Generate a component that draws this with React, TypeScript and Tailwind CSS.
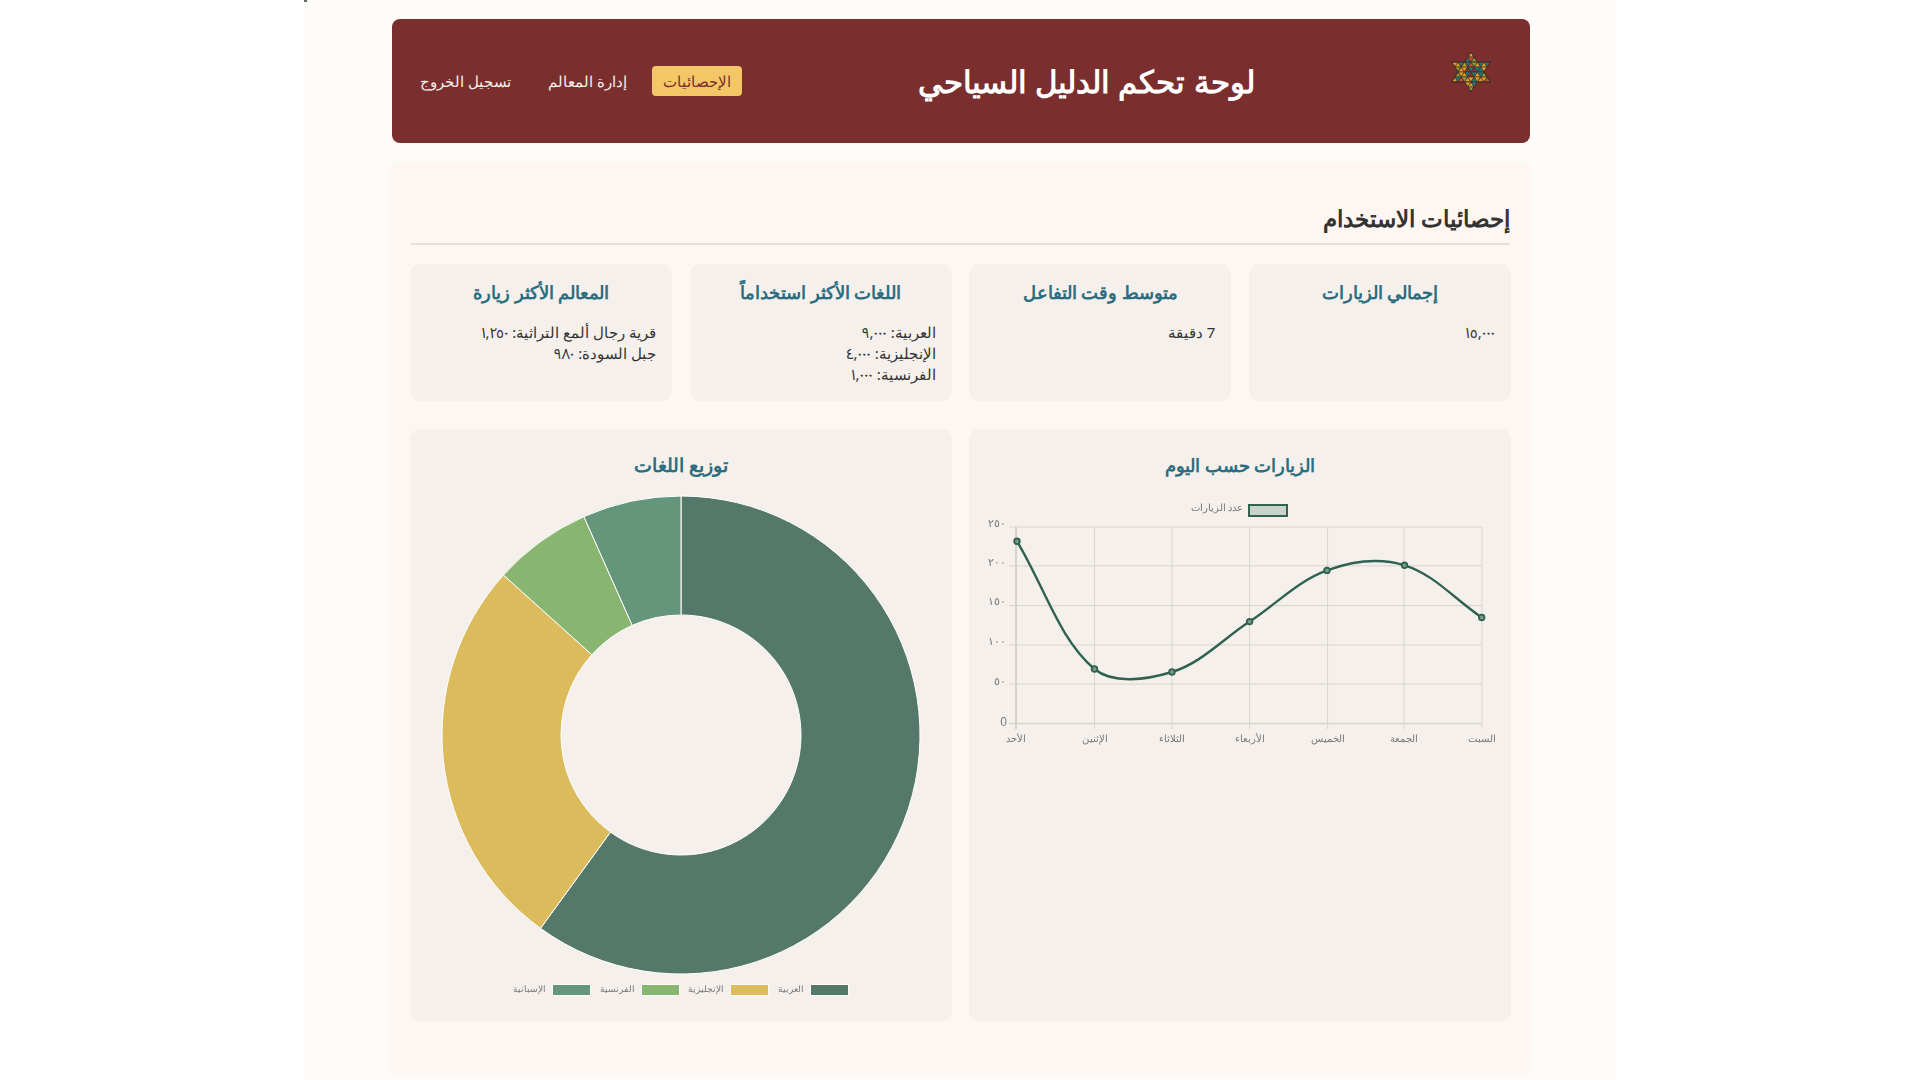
import React from 'react';

const statCards = [
  { title: 'إجمالي الزيارات', lines: [['', '١٥,٠٠٠']] },
  { title: 'متوسط وقت التفاعل', lines: [['7 دقيقة', '']] },
  { title: 'اللغات الأكثر استخداماً', lines: [['العربية: ', '٩,٠٠٠'], ['الإنجليزية: ', '٤,٠٠٠'], ['الفرنسية: ', '١,٠٠٠']] },
  { title: 'المعالم الأكثر زيارة', lines: [['قرية رجال ألمع التراثية: ', '١,٢٥٠'], ['جبل السودة: ', '٩٨٠']] },
];

const days = [
  { label: 'الأحد', x: 47 },
  { label: 'الإثنين', x: 125.5 },
  { label: 'الثلاثاء', x: 203 },
  { label: 'الأربعاء', x: 280.6 },
  { label: 'الخميس', x: 358.6 },
  { label: 'الجمعة', x: 435 },
  { label: 'السبت', x: 513 },
];

const yTicks = [
  { label: '٢٥٠', grid: 37, text: 33.8 },
  { label: '٢٠٠', grid: 75.8, text: 72.6 },
  { label: '١٥٠', grid: 115.6, text: 112.5 },
  { label: '١٠٠', grid: 155, text: 152.5 },
  { label: '٥٠', grid: 194, text: 192 },
];

const points = [
  [48, 51.3],
  [125.5, 179],
  [203, 182],
  [280.6, 131.6],
  [358, 80.4],
  [435.5, 75.3],
  [512.7, 127.5],
];

const legend = [
  { label: 'العربية', color: 'bg-[#54796b]' },
  { label: 'الإنجليزية', color: 'bg-[#dbbb5b]' },
  { label: 'الفرنسية', color: 'bg-[#88b56f]' },
  { label: 'الإسبانية', color: 'bg-[#64967c]' },
];

// same spline maths the chart lib uses
function splinePath(pts: number[][], t: number) {
  const ctrl = pts.map((p, i) => {
    const prev = pts[i - 1] ?? p;
    const next = pts[i + 1] ?? p;
    const d01 = Math.hypot(p[0] - prev[0], p[1] - prev[1]);
    const d12 = Math.hypot(next[0] - p[0], next[1] - p[1]);
    const total = d01 + d12 || 1;
    const fa = (t * d01) / total;
    const fb = (t * d12) / total;
    return {
      before: [p[0] - fa * (next[0] - prev[0]), p[1] - fa * (next[1] - prev[1])],
      after: [p[0] + fb * (next[0] - prev[0]), p[1] + fb * (next[1] - prev[1])],
    };
  });
  let d = `M${pts[0][0]} ${pts[0][1]}`;
  for (let i = 1; i < pts.length; i++) {
    d += ` C${ctrl[i - 1].after[0]} ${ctrl[i - 1].after[1]} ${ctrl[i].before[0]} ${ctrl[i].before[1]} ${pts[i][0]} ${pts[i][1]}`;
  }
  return d;
}

function Logo() {
  const colors = ['#d9a227', '#1f7a7a', '#d9a227', '#c8502a', '#1f7a7a', '#8a9a3a', '#d9a227'];
  const s = 6.5;
  const h = 5;
  const cells: React.ReactNode[] = [];
  for (let r = 0; r < 8; r++) {
    const y = 1 + r * h;
    for (let j = -5; j <= 5; j++) {
      const px = 21 + (j + (r % 2) / 2) * s;
      const up = `${px},${y} ${px - s / 2},${y + h} ${px + s / 2},${y + h}`;
      const down = `${px},${y} ${px + s},${y} ${px + s / 2},${y + h}`;
      const seed = Math.abs(j * 3) + r * 5;
      const nearCenter = (r === 3 || r === 4) && Math.abs(px - 21) < 5;
      cells.push(<polygon key={`u${r}${j}`} points={up} fill={nearCenter ? '#8a3030' : colors[seed % 7]} stroke="#4a2e28" strokeWidth="0.7" />);
      cells.push(<polygon key={`d${r}${j}`} points={down} fill={nearCenter ? '#1f7a7a' : colors[(seed + 2) % 7]} stroke="#4a2e28" strokeWidth="0.7" />);
    }
  }
  const star = 'M21 1 L40.5 31 L1.5 31 Z M21 41 L1.5 11 L40.5 11 Z';
  return (
    <svg width="42" height="42" viewBox="0 0 42 42" className="mb-[19px] shrink-0">
      <defs>
        <clipPath id="star">
          <path d="M21 1 L27.5 11 L40.5 11 L34 21 L40.5 31 L27.5 31 L21 41 L14.5 31 L1.5 31 L8 21 L1.5 11 L14.5 11 Z" />
        </clipPath>
      </defs>
      <g clipPath="url(#star)">{cells}</g>
      <path d="M21 1 L27.5 11 L40.5 11 L34 21 L40.5 31 L27.5 31 L21 41 L14.5 31 L1.5 31 L8 21 L1.5 11 L14.5 11 Z" fill="none" stroke="#4a2e28" strokeWidth="1" />
      <path d={star} fill="none" stroke="#4a2e28" strokeWidth="0.5" />
    </svg>
  );
}

function LineChart() {
  return (
    <svg width="540" height="270" viewBox="0 0 540 270" className="block blur-[0.4px]">
      <rect x="280" y="15" width="38" height="11" fill="#c9d3cb" stroke="#2f6250" strokeWidth="2" />
      <text x="274" y="18.5" textAnchor="end" dominantBaseline="middle" fontSize="9.6" fill="#777">
        عدد الزيارات
      </text>
      {days.map((d) => (
        <g key={d.label}>
          <line x1={d.x} x2={d.x} y1="37" y2="239" stroke="#d8d4d0" />
          <text x={d.x} y="251.5" textAnchor="middle" fontSize="9.6" fill="#777">
            {d.label}
          </text>
        </g>
      ))}
      {yTicks.map((t) => (
        <g key={t.label}>
          <line x1="40" x2="513" y1={t.grid} y2={t.grid} stroke="#d8d4d0" />
          <text x="37" y={t.text} textAnchor="end" dominantBaseline="middle" fontSize="11" fill="#777">
            {t.label}
          </text>
        </g>
      ))}
      <line x1="47" x2="47" y1="37" y2="239" stroke="#c4c0bc" />
      <line x1="40" x2="513" y1="233.4" y2="233.4" stroke="#d6d2ce" strokeWidth="1.5" />
      <text x="38" y="233" textAnchor="end" dominantBaseline="middle" fontSize="12" fontFamily="Liberation Sans, sans-serif" fill="#777">
        0
      </text>
      <path d={splinePath(points, 0.35)} fill="none" stroke="#2f6250" strokeWidth="2.4" />
      {points.map(([x, y]) => (
        <circle key={x} cx={x} cy={y} r="2.8" fill="#7d9a8c" stroke="#2f6250" strokeWidth="1.8" />
      ))}
    </svg>
  );
}

function Donut() {
  const cx = 240;
  const cy = 240;
  const R = 239;
  const r = 120;
  const data = [
    { v: 60, c: '#54796b' },
    { v: 26.67, c: '#dbbb5b' },
    { v: 6.67, c: '#88b56f' },
    { v: 6.66, c: '#64967c' },
  ];
  let a = -Math.PI / 2;
  return (
    <svg width="480" height="480" viewBox="0 0 480 480" className="block">
      {data.map((d) => {
        const next = a + (d.v / 100) * Math.PI * 2;
        const large = d.v > 50 ? 1 : 0;
        const path = `M${cx + R * Math.cos(a)} ${cy + R * Math.sin(a)} A${R} ${R} 0 ${large} 1 ${cx + R * Math.cos(next)} ${cy + R * Math.sin(next)} L${cx + r * Math.cos(next)} ${cy + r * Math.sin(next)} A${r} ${r} 0 ${large} 0 ${cx + r * Math.cos(a)} ${cy + r * Math.sin(a)} Z`;
        a = next;
        return <path key={d.c} d={path} fill={d.c} stroke="#fff" strokeWidth="1" />;
      })}
    </svg>
  );
}

export default function App() {
  return (
    <div dir="rtl" className="relative h-[1080px] overflow-hidden bg-white font-['Noto_Sans',sans-serif]">
      <span className="absolute left-[304px] top-0 h-[2px] w-[3px] bg-[#666]" />
      <div dir="ltr" className="mx-auto h-[1080px] w-[1312px] bg-[#fefcf9] pt-[19px]">
        <div dir="rtl" className="ml-[87px] w-[1139px]">
          <header className="ml-px flex h-[124px] items-center rounded-lg bg-[#7b2e2e] pl-[18px] pr-[38px] text-[#f5efe6]">
            <Logo />
            <h1 className="flex-1 pr-[19px] text-center text-[31px] font-bold text-white">لوحة تحكم الدليل السياحي</h1>
            <nav className="flex items-center gap-[15px] text-[15.2px]">
              <span className="flex h-[30.6px] items-center rounded bg-[#f4c766] px-[11px] text-[#7b2e2e]">الإحصائيات</span>
              <span className="ml-[2px] px-[10px]">إدارة المعالم</span>
              <span className="px-[10px]">تسجيل الخروج</span>
            </nav>
          </header>

          <main className="mt-5 h-[910px] rounded-lg bg-[#fef6f0] px-[19px] pt-5 text-[#333] shadow-[0_0_5px_rgba(120,90,60,0.05)]">
            <h2 className="mx-px h-[62px] border-b-2 border-[#e5dfd8] pt-[19.5px] text-[23.2px] leading-[30px] font-semibold">إحصائيات الاستخدام</h2>
            <div className="mt-[19px] grid grid-cols-4 gap-[17.6px]">
              {statCards.map((card) => (
                <div key={card.title} className="h-[137px] rounded-[10px] bg-[#f5f0ec] px-[16px] pt-[14px]">
                  <h3 className="text-center text-[18.2px] leading-[28px] font-bold text-[#2c6e7f]">{card.title}</h3>
                  <div className="mt-[16px] text-[15px] leading-[21px]">
                    {card.lines.map(([text, num]) => (
                      <p key={text + num}>
                        {text}
                        <span className="font-['Noto_Sans_Arabic_UI','Noto_Sans',sans-serif] tracking-[1.5px]">{num}</span>
                      </p>
                    ))}
                  </div>
                </div>
              ))}
            </div>
            <div className="mt-[27.5px] grid grid-cols-2 gap-[17.6px]">
              <div className="h-[592.5px] rounded-[10px] bg-[#f5f0ec] pt-[22px]">
                <h3 className="h-[29px] text-center text-[18.2px] leading-[29px] font-bold text-[#2c6e7f]">الزيارات حسب اليوم</h3>
                <div dir="ltr" className="mt-[10.5px]">
                  <LineChart />
                </div>
              </div>
              <div className="flex h-[592.5px] flex-col items-center rounded-[10px] bg-[#f5f0ec] pt-[22px]">
                <h3 className="h-[29px] text-center text-[19.2px] leading-[28px] font-bold text-[#2c6e7f]">توزيع اللغات</h3>
                <div className="mt-[15px]">
                  <Donut />
                </div>
                <div className="mt-[9.5px] flex items-center gap-[8.5px] text-[9.4px] leading-[12px] text-[#777] blur-[0.3px]">
                  {legend.map((l) => (
                    <div key={l.label} className="flex items-center gap-[6px]">
                      <span className={`block h-3 w-[39px] border border-[#fdfbf8] ${l.color}`} />
                      <span className="-mt-[3px]">{l.label}</span>
                    </div>
                  ))}
                </div>
              </div>
            </div>
          </main>
        </div>
      </div>
    </div>
  );
}
